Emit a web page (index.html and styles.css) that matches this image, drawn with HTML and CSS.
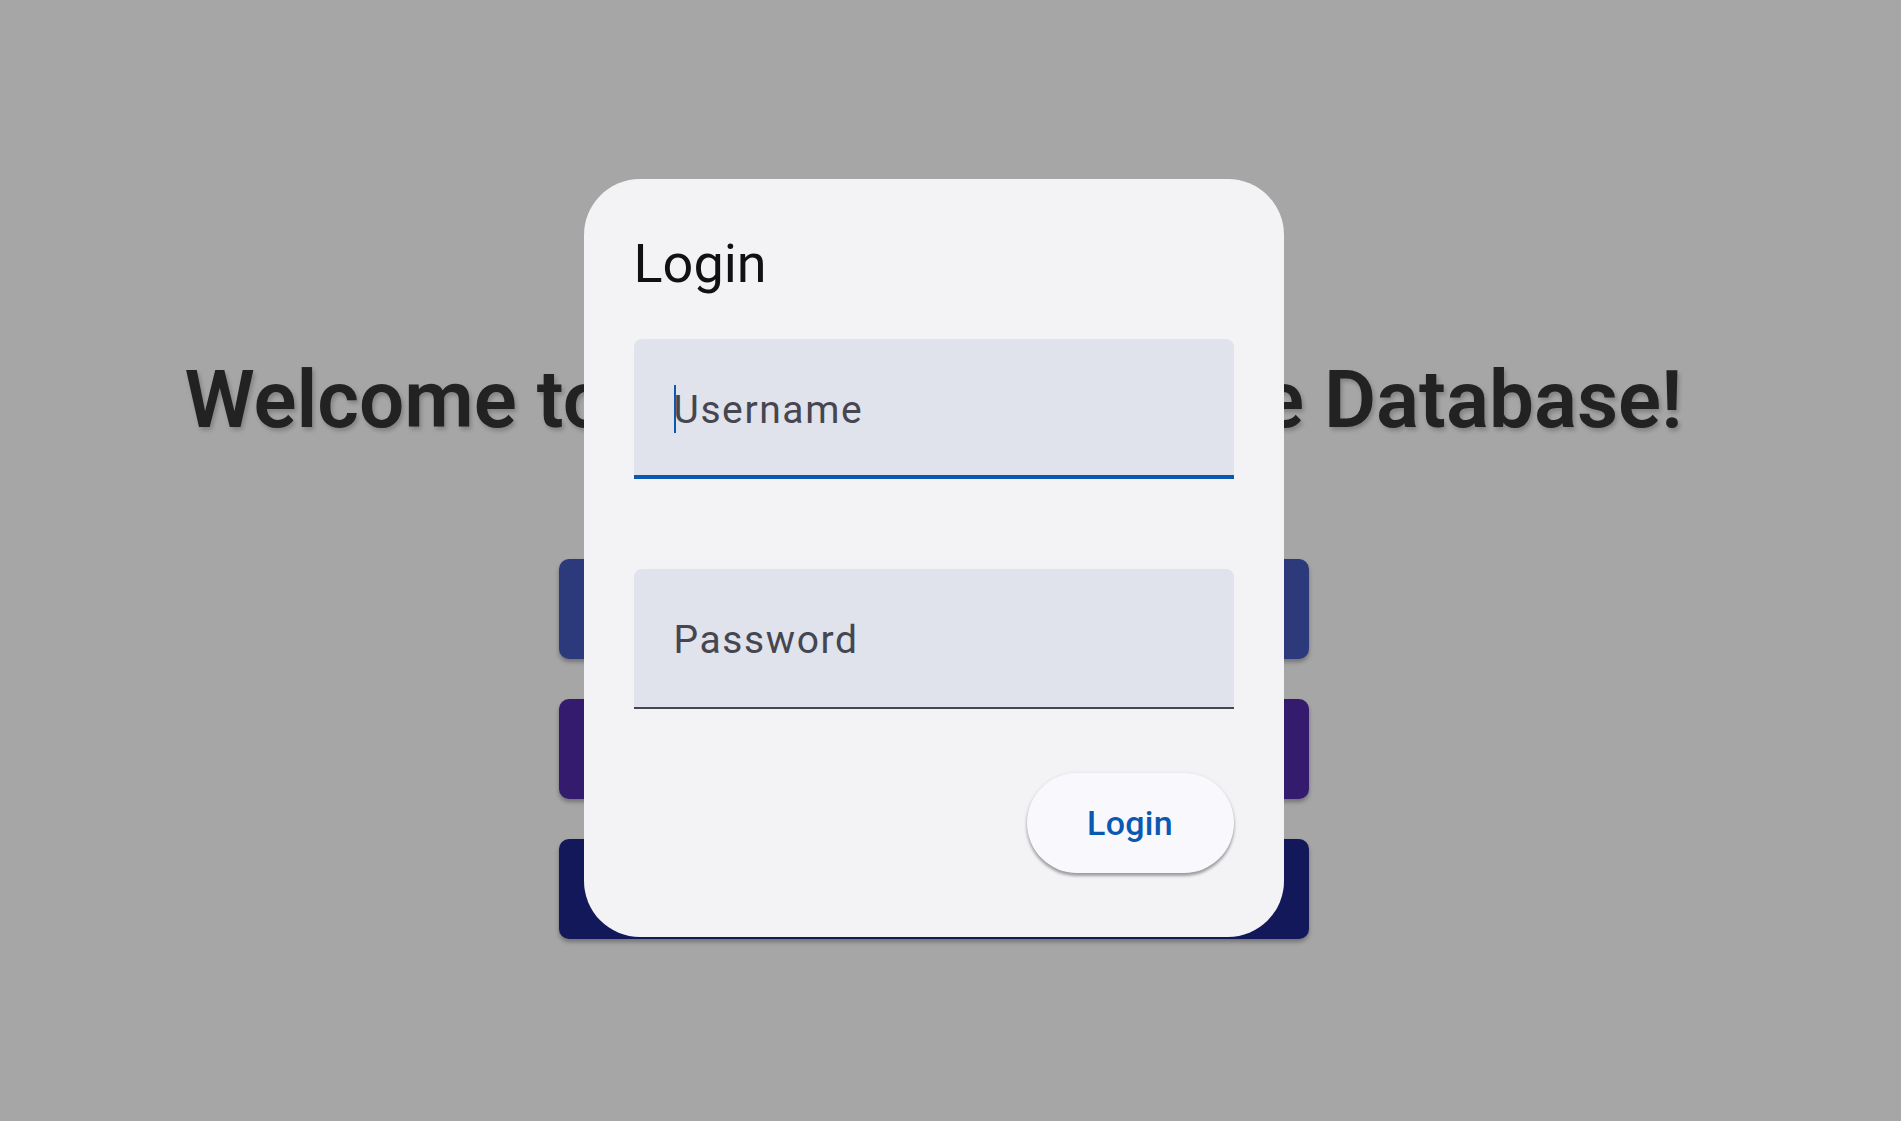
FILE: index.html
```html
<!DOCTYPE html>
<html lang="en">
<head>
<meta charset="utf-8">
<title>Movie Database</title>
<link rel="stylesheet" href="styles.css">
</head>
<body>
<main class="page">
  <h1 class="welcome">Welcome to the Ultimate Movie Database!</h1>
  <nav class="menu">
    <div class="menu-btn menu-btn-blue"></div>
    <div class="menu-btn menu-btn-purple"></div>
    <div class="menu-btn menu-btn-navy"></div>
  </nav>
</main>
<div class="overlay">
  <section class="dialog">
    <h2 class="dialog-title">Login</h2>
    <div class="field field-focused">
      <span class="caret"></span>
      <span class="field-text">Username</span>
    </div>
    <div class="field field-gap">
      <span class="field-text">Password</span>
    </div>
    <div class="actions">
      <button class="login-btn">Login</button>
    </div>
  </section>
</div>
</body>
</html>
```
FILE: styles.css
```css
html, body {
  margin: 0;
  padding: 0;
}
body {
  background: #a6a6a6;
  font-family: Roboto, "Liberation Sans", sans-serif;
  width: 1901px;
  height: 1121px;
  overflow: hidden;
}
.page {
  padding-right: 34px;
  display: flex;
  flex-direction: column;
  align-items: center;
}
.welcome {
  margin: 353px 0 0 0;
  font-size: 80px;
  line-height: 94px;
  font-weight: 600;
  color: #222222;
  text-shadow: 2px 3px 4px rgba(0, 0, 0, 0.22);
  white-space: nowrap;
}
.menu {
  margin-top: 112px;
  display: flex;
  flex-direction: column;
  gap: 40px;
}
.menu-btn {
  width: 750px;
  height: 100px;
  border-radius: 10px;
  box-shadow: 0 3px 4px rgba(0, 0, 0, 0.3);
}
.menu-btn-blue { background: #2c3a7c; }
.menu-btn-purple { background: #341b6e; }
.menu-btn-navy { background: #12185a; }

.overlay {
  position: fixed;
  inset: 0;
  padding-right: 34px;
  padding-bottom: 5px;
  display: flex;
  align-items: center;
  justify-content: center;
}
.dialog {
  width: 700px;
  box-sizing: border-box;
  background: #f3f3f6;
  border-radius: 56px;
  padding: 54px 50px 64px 50px;
  display: flex;
  flex-direction: column;
}
.dialog-title {
  margin: 0 0 44px 0;
  font-size: 54px;
  line-height: 62px;
  font-weight: 400;
  color: #111111;
}
.field {
  position: relative;
  height: 140px;
  box-sizing: border-box;
  background: #e0e2ec;
  border-radius: 8px 8px 0 0;
  border-bottom: 2px solid #45464f;
  padding: 48px 40px 0 40px;
}
.field-focused {
  border-bottom: 4px solid #0b58b3;
}
.field-gap {
  margin-top: 90px;
}
.field-text {
  font-size: 39px;
  line-height: 46px;
  letter-spacing: 1.6px;
  color: #45464f;
}
.caret {
  position: absolute;
  left: 40px;
  top: 46px;
  width: 2px;
  height: 48px;
  background: #0b58b3;
}
.actions {
  margin-top: 64px;
  display: flex;
  justify-content: flex-end;
}
.login-btn {
  width: 207px;
  height: 100px;
  border: none;
  border-radius: 50px;
  background: #f8f8fd;
  color: #0b58b3;
  font-family: Roboto, "Liberation Sans", sans-serif;
  font-size: 34px;
  font-weight: 500;
  letter-spacing: 0.3px;
  box-shadow: 0 3px 3px rgba(0, 0, 0, 0.3), 0 1px 4px rgba(0, 0, 0, 0.12);
  padding: 0;
}
```
